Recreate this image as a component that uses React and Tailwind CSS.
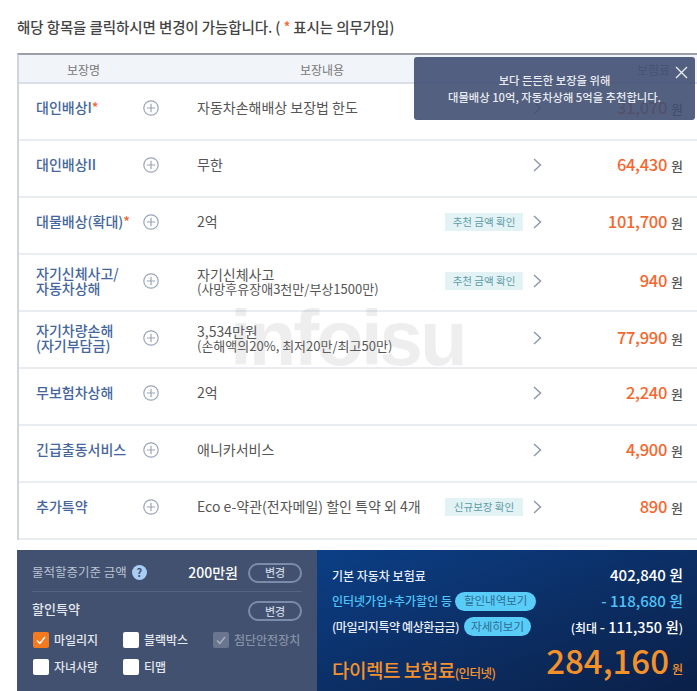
const rows = [
  { name: <>대인배상I<span className="text-[#f4672e]">*</span></>, detail: "자동차손해배상 보장법 한도", price: "31,070" },
  { name: "대인배상II", detail: "무한", price: "64,430" },
  { name: <>대물배상(확대)<span className="text-[#f4672e]">*</span></>, detail: "2억", badge: "추천 금액 확인", price: "101,700" },
  { name: ["자기신체사고/", "자동차상해"], detail: "자기신체사고", sub: "(사망후유장애3천만/부상1500만)", badge: "추천 금액 확인", price: "940" },
  { name: ["자기차량손해", "(자기부담금)"], detail: "3,534만원", sub: "(손해액의20%, 최저20만/최고50만)", price: "77,990" },
  { name: "무보험차상해", detail: "2억", price: "2,240" },
  { name: "긴급출동서비스", detail: "애니카서비스", price: "4,900" },
  { name: "추가특약", detail: "Eco e-약관(전자메일) 할인 특약 외 4개", badge: "신규보장 확인", price: "890" },
];

const PlusIcon = () => (
  <svg width="16" height="16" viewBox="0 0 16 16" fill="none" stroke="#9aa5b8" strokeWidth="1.2">
    <circle cx="8" cy="8" r="7.2" />
    <path d="M8 3.8v8.4M3.8 8h8.4" />
  </svg>
);

const Chevron = () => (
  <svg width="9" height="14" viewBox="0 0 9 14" fill="none" stroke="#8e9ab0" strokeWidth="1.5">
    <path d="M1 1l6.5 6L1 13" />
  </svg>
);

const Check = ({ color = "#fff" }) => (
  <svg width="10" height="9" viewBox="0 0 10 9" fill="none" stroke={color} strokeWidth="1.4">
    <path d="M1 4.5l2.8 3L9 1" />
  </svg>
);

const Row = ({ item }) => {
  const twoLine = Array.isArray(item.name);
  return (
    <div className={`flex h-[57px] items-center border-b-2 border-[#e9edf2] ${twoLine ? "pb-[3px]" : "pb-[8px]"}`}>
      <div className="w-[116px] pl-[17px] text-[14px] leading-[15px] font-medium whitespace-nowrap text-[#45669c]">
        {twoLine ? item.name.map((t) => <div key={t}>{t}</div>) : item.name}
      </div>
      <div className="flex w-[62px] shrink-0 pl-[8px]"><PlusIcon /></div>
      <div className="w-[248px] shrink-0 text-[14px] leading-[15px] whitespace-nowrap text-[#555]">
        <div>{item.detail}</div>
        {item.sub && <div className="text-[13px] leading-[14px]">{item.sub}</div>}
      </div>
      <div className="w-[78px] shrink-0">
        {item.badge && (
          <div className="flex h-[18px] items-center justify-center bg-[#e3f2f5] text-[10.5px] text-[#5d9ca6]">{item.badge}</div>
        )}
      </div>
      <div className="flex w-[19px] shrink-0 justify-end"><Chevron /></div>
      <div className="flex flex-1 items-baseline justify-end pr-[14px] text-[#555]">
        <span className="text-[16.5px] leading-[20px] font-medium tracking-[-0.3px] text-[#f4672e]">{item.price}</span>
        <span className="ml-[4px] text-[13px] leading-[20px] font-medium">원</span>
      </div>
    </div>
  );
};

const Box = ({ label, checked, disabled }) => (
  <div className="flex items-center gap-[5px]">
    <div className={`flex h-[16px] w-[16px] items-center justify-center rounded-[2px] ${checked ? "bg-[#f47a1f]" : disabled ? "bg-[#6a768f]" : "bg-white"}`}>
      {checked && <Check />}
      {disabled && <Check color="#a9b1c1" />}
    </div>
    <span className={`text-[12px] font-medium ${disabled ? "text-[#8490a6]" : "text-[#e3e7ee]"}`}>{label}</span>
  </div>
);

const ChangeButton = () => (
  <div className="flex h-[20px] w-[54px] items-center justify-center rounded-full border-2 border-[#7b8cab] text-[11px] font-medium text-[#c9d2e0]">변경</div>
);

export default function App() {
  return (
    <div className="relative h-[691px] w-[697px] overflow-hidden bg-white font-['Noto_Sans_CJK_KR','Noto_Sans',sans-serif]">
      {/* watermark */}
      <div className="pointer-events-none absolute top-[292px] left-[230px] font-['Liberation_Sans',sans-serif] text-[78px] leading-[92px] font-bold tracking-[-3px] text-[#8f8f8f]/15">infoisu</div>

      <div className="flex h-[53px] items-center pl-[17px] text-[14.5px] font-medium tracking-[-0.1px] text-[#444]">
        해당 항목을 클릭하시면 변경이 가능합니다. ( <span className="mx-[3px] text-[#f4672e]">*</span> 표시는 의무가입)
      </div>

      <div className="ml-[17px] border-t-2 border-l-2 border-[#9a9fa8] border-l-[#d0d5dc]">
        <div className="flex h-[29px] items-center border-b-2 border-[#d9dfe7] bg-[#f1f4f9] pt-[2px] text-[12px] text-[#777]">
          <div className="w-[116px] pl-[48px]">보장명</div>
          <div className="ml-[165px]">보장내용</div>
          <div className="ml-auto pr-[27px]">보험료</div>
        </div>
        {rows.map((item) => <Row key={item.price} item={item} />)}
      </div>

      <div className="mt-[10px] ml-[17px] flex h-[141px]">
        <div className="w-[300px] shrink-0 bg-[#42516f] px-[15px] pt-[10px]">
          <div className="flex h-[32px] items-center border-b border-[#56647f] pb-[6px]">
            <span className="text-[12.5px] text-[#b9c2d2]">물적할증기준 금액</span>
            <span className="ml-[5px] flex h-[15px] w-[15px] items-center justify-center rounded-full bg-[#a9cdf5] text-[11px] font-bold text-[#42516f]">?</span>
            <span className="ml-auto text-[14px] font-medium text-white">200만원</span>
            <span className="ml-[10px]"><ChangeButton /></span>
          </div>
          <div className="mt-[6px] flex h-[26px] items-center justify-between">
            <span className="pb-[4px] text-[13px] font-medium text-[#e3e7ee]">할인특약</span>
            <ChangeButton />
          </div>
          <div className="mt-[7px] grid grid-cols-[90px_90px_1fr] gap-y-[9px] pl-[1px]">
            <Box label="마일리지" checked />
            <Box label="블랙박스" />
            <Box label="첨단안전장치" disabled />
            <Box label="자녀사랑" />
            <Box label="티맵" />
          </div>
        </div>

        <div className="flex-1 bg-gradient-to-br from-[#0b3f86] to-[#0a2048] pt-[13px] pr-[14px] pl-[15px] text-[12px] font-medium">
          <div className="flex h-[25px] items-center justify-between text-[#e8edf5]">
            <span>기본 자동차 보험료</span>
            <span className="text-[15px] text-white">402,840 원</span>
          </div>
          <div className="flex h-[26px] items-center justify-between text-[#4fc3f7]">
            <span className="flex items-center">
              인터넷가입+추가할인 등
              <span className="ml-[3px] flex h-[19px] items-center rounded-full bg-[#5accf8] px-[9px] text-[11.5px] font-normal text-[#2c6d92]">할인내역보기</span>
            </span>
            <span className="text-[15px]">- 118,680 원</span>
          </div>
          <div className="flex h-[25px] items-center justify-between text-[#e8edf5]">
            <span className="flex items-center tracking-[-0.4px]">
              (마일리지특약 예상환급금)
              <span className="ml-[5px] flex h-[19px] items-center rounded-full bg-[#5accf8] px-[7px] text-[11.5px] font-normal tracking-normal text-[#2c6d92]">자세히보기</span>
            </span>
            <span className="text-white">(최대 <span className="text-[14.5px]">- 111,350 원</span>)</span>
          </div>
          <div className="flex items-end justify-between text-[#f5912a]">
            <span className="text-[19px] leading-[34px] font-medium tracking-[-0.5px]">
              다이렉트 보험료<span className="text-[12.5px]">(인터넷)</span>
            </span>
            <span className="flex items-baseline leading-[42px]">
              <span className="text-[33px] font-medium">284,160</span>
              <span className="ml-[3px] text-[12px]">원</span>
            </span>
          </div>
        </div>
      </div>

      {/* tooltip */}
      <div className="absolute top-[57px] left-[414px] flex h-[63px] w-[281px] flex-col items-center justify-center rounded-[3px] bg-[#404f72]/90 pt-[1px] text-[11.3px] leading-[17px] font-medium text-[#e8ebf1]">
        <div>보다 든든한 보장을 위해</div>
        <div>대물배상 10억, 자동차상해 5억을 추천합니다.</div>
        <svg className="absolute top-[9px] right-[7px]" width="13" height="13" viewBox="0 0 13 13" fill="none" stroke="#e8ebf1" strokeWidth="1.4">
          <path d="M1 1l11 11M12 1L1 12" />
        </svg>
      </div>
    </div>
  );
}
